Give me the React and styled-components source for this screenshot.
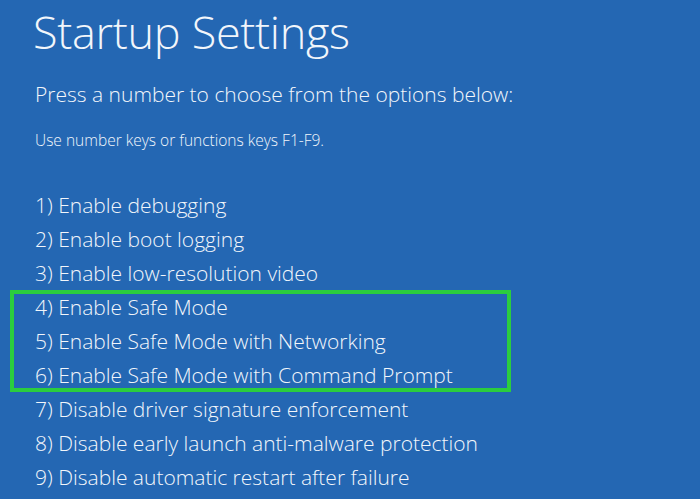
import styled, { createGlobalStyle } from 'styled-components';

const GlobalStyle = createGlobalStyle`
  html, body {
    margin: 0;
    padding: 0;
    background: #2467b3;
  }
  body {
    font-family: "Open Sans", "Noto Sans", sans-serif;
    color: #f2f6fb;
  }
`

const Screen = styled.main`
  width: 700px;
  height: 499px;
  overflow: hidden;
  background: #2467b3;
  padding: 0 0 0 33px;
  box-sizing: border-box;
`

const Title = styled.h1`
  margin: 0;
  padding-top: 2px;
  font-size: 45px;
  font-weight: 300;
  line-height: 60px;
  letter-spacing: -0.3px;
`

const Prompt = styled.p`
  margin: 18px 0 0 2px;
  font-size: 21px;
  font-weight: 300;
  line-height: 28px;
`

const Hint = styled.p`
  margin: 22px 0 0 2px;
  font-size: 15.5px;
  font-weight: 300;
  line-height: 20px;
`

const OptionList = styled.ol`
  list-style: none;
  margin: 38px 0 0 0;
  padding: 0;
`

// green frame drawn inside the rows so the list spacing stays even
const Highlight = styled.div`
  margin-left: -23px;
  width: 501px;
  padding-left: 23px;
  box-sizing: border-box;
  box-shadow: inset 0 0 0 4px #2bcd3e;
`

const Option = styled.li`
  font-size: 21px;
  font-weight: 300;
  line-height: 34px;
  height: 34px;
  padding-left: 2px;
  white-space: nowrap;
`

const before = [
  '1) Enable debugging',
  '2) Enable boot logging',
  '3) Enable low-resolution video',
]
const safe = [
  '4) Enable Safe Mode',
  '5) Enable Safe Mode with Networking',
  '6) Enable Safe Mode with Command Prompt',
]
const after = [
  '7) Disable driver signature enforcement',
  '8) Disable early launch anti-malware protection',
  '9) Disable automatic restart after failure',
]

const App = () => {
  return (
    <>
      <GlobalStyle />
      <Screen>
        <Title>Startup Settings</Title>
        <Prompt>Press a number to choose from the options below:</Prompt>
        <Hint>Use number keys or functions keys F1-F9.</Hint>
        <OptionList>
          {before.map(t => <Option key={t}>{t}</Option>)}
          <Highlight>
            {safe.map(t => <Option key={t}>{t}</Option>)}
          </Highlight>
          {after.map(t => <Option key={t}>{t}</Option>)}
        </OptionList>
      </Screen>
    </>
  );
};

export default App;
